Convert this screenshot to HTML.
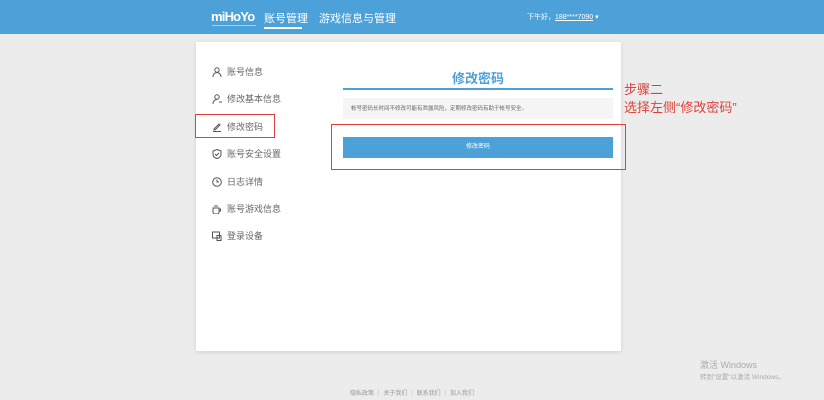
<!DOCTYPE html>
<html><head><meta charset="utf-8"><style>
*{margin:0;padding:0;box-sizing:border-box}
body{width:824px;height:400px;background:#ececec;font-family:"Liberation Sans","Noto Sans CJK SC",sans-serif;position:relative;overflow:hidden}
.hdr{position:absolute;left:0;top:0;width:824px;height:34px;background:#4ba1d8;color:#fff}
.a{position:absolute}
.card{position:absolute;left:196px;top:42px;width:425px;height:309px;background:#fff;box-shadow:0 1px 4px rgba(0,0,0,.12)}
.mi{position:absolute;left:212px;font-size:9px;color:#666;display:flex;align-items:center;gap:5px}
.ic{width:10px;height:10px;display:inline-block}
.red{border:1px solid #e0403a;position:absolute}
</style></head><body>
<div class="hdr">
<div class="a" style="left:211px;top:9px;font-size:13px;font-weight:bold;letter-spacing:-0.8px">miHoYo</div>
<div class="a" style="left:212px;top:25px;width:44px;height:1px;background:rgba(255,255,255,.5)"></div>
<div class="a" style="left:264px;top:10px;font-size:11px">账号管理</div>
<div class="a" style="left:264px;top:27px;width:38px;height:2px;background:#fff"></div>
<div class="a" style="left:319px;top:10px;font-size:11px">游戏信息与管理</div>
<div class="a" style="left:527px;top:12px;font-size:7px">下午好，<span style="text-decoration:underline">188****7090</span> ▾</div>
</div>
<div class="card"></div>
<div class="mi" style="top:65px"><svg class="ic" viewBox="0 0 10 10" fill="none" stroke="#555"><circle cx="5" cy="3" r="2.2"/><path d="M1 10c0-3 2-4.5 4-4.5s4 1.5 4 4.5"/></svg>账号信息</div>
<div class="mi" style="top:92px"><svg class="ic" viewBox="0 0 10 10" fill="none" stroke="#555"><circle cx="5" cy="3" r="2.2"/><path d="M1 10c0-3 2-4.5 4-4.5M7 8h3"/></svg>修改基本信息</div>
<div class="mi" style="top:120px"><svg class="ic" viewBox="0 0 10 10" fill="none" stroke="#555"><path d="M2 7l5-5 1 1-5 5H2zM1 9.5h8"/></svg>修改密码</div>
<div class="mi" style="top:147px"><svg class="ic" viewBox="0 0 10 10" fill="none" stroke="#555"><path d="M5 .5l4 1.5v3c0 2.5-2 4-4 4.5C3 9 1 7.5 1 5V2z"/><path d="M3 5l1.5 1.5L7 4"/></svg>账号安全设置</div>
<div class="mi" style="top:175px"><svg class="ic" viewBox="0 0 10 10" fill="none" stroke="#555"><circle cx="5" cy="5" r="4.3"/><path d="M5 2.5V5h2"/></svg>日志详情</div>
<div class="mi" style="top:202px"><svg class="ic" viewBox="0 0 10 10" fill="none" stroke="#555"><path d="M1 4h6v4a2 2 0 0 1-2 2H3a2 2 0 0 1-2-2zM7 5h1.5v2H7M3 1v2M5 1v2"/></svg>账号游戏信息</div>
<div class="mi" style="top:229px"><svg class="ic" viewBox="0 0 10 10" fill="none" stroke="#555"><rect x=".5" y="1" width="7" height="6"/><rect x="5" y="4.5" width="4" height="5"/></svg>登录设备</div>
<div class="a" style="left:343px;top:68px;width:270px;text-align:center;font-size:13px;font-weight:bold;color:#4ba1d8">修改密码</div>
<div class="a" style="left:343px;top:88px;width:270px;height:2px;background:#4ba1d8"></div>
<div class="a" style="left:343px;top:98px;width:270px;height:21px;background:#f5f5f5;font-size:5.5px;color:#666;padding:6px 0 0 8px;white-space:nowrap">帐号密码长时间不修改可能有泄露风险，定期修改密码有助于帐号安全。</div>
<div class="a" style="left:343px;top:137px;width:270px;height:21px;background:#4ba1d8;color:#fff;font-size:6px;text-align:center;line-height:21px">修改密码</div>
<div class="red" style="left:195px;top:114px;width:80px;height:24px"></div>
<div class="red" style="left:331px;top:124px;width:295px;height:46px"></div>
<div class="a" style="left:624px;top:81px;font-size:13px;color:#e0403a;line-height:18px">步骤二<br>选择左侧“修改密码”</div>
<div class="a" style="left:700px;top:358px;font-size:9px;color:#aaa">激活 Windows</div>
<div class="a" style="left:700px;top:371px;font-size:6.5px;color:#aaa">转到"设置"以激活 Windows。</div>
<div class="a" style="left:350px;top:388px;font-size:6px;color:#999">隐私政策 ｜ 关于我们 ｜ 联系我们 ｜ 加入我们</div>
</body></html>
